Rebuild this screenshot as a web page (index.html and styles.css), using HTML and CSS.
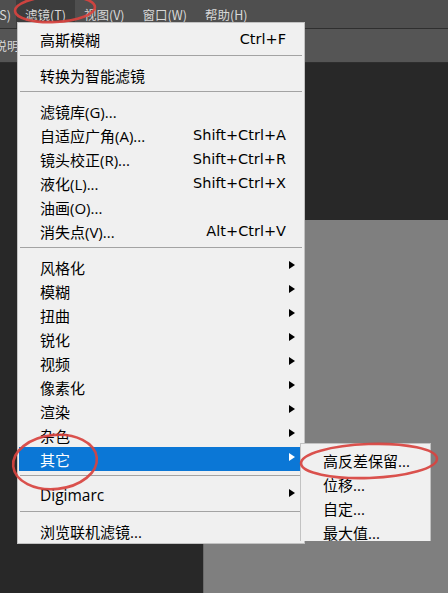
FILE: index.html
```html
<!DOCTYPE html>
<html lang="zh-CN">
<head>
<meta charset="utf-8">
<title>滤镜菜单</title>
<link rel="stylesheet" href="styles.css">
</head>
<body>
<div class="screen">
  <div class="menubar">
    <div class="mb-item mb-first"><span>选择(S)</span></div>
    <div class="mb-item active">滤镜(T)</div>
    <div class="mb-item">视图(V)</div>
    <div class="mb-item">窗口(W)</div>
    <div class="mb-item">帮助(H)</div>
  </div>
  <div class="optbar"><span class="opt-text">说明</span></div>
  <div class="workspace">
    <div class="panel-left"></div>
    <div class="doc">
      <div class="doc-top"></div>
      <div class="canvas"></div>
    </div>
  </div>

  <div class="menu main-menu">
    <div class="item"><span class="label">高斯模糊</span><span class="key">Ctrl+F</span><span class="arrow-col"></span></div>
    <div class="sep"></div>
    <div class="item"><span class="label">转换为智能滤镜</span><span class="arrow-col"></span></div>
    <div class="sep"></div>
    <div class="item"><span class="label">滤镜库(G)...</span><span class="arrow-col"></span></div>
    <div class="item"><span class="label">自适应广角(A)...</span><span class="key">Shift+Ctrl+A</span><span class="arrow-col"></span></div>
    <div class="item"><span class="label">镜头校正(R)...</span><span class="key">Shift+Ctrl+R</span><span class="arrow-col"></span></div>
    <div class="item"><span class="label">液化(L)...</span><span class="key">Shift+Ctrl+X</span><span class="arrow-col"></span></div>
    <div class="item"><span class="label">油画(O)...</span><span class="arrow-col"></span></div>
    <div class="item"><span class="label">消失点(V)...</span><span class="key">Alt+Ctrl+V</span><span class="arrow-col"></span></div>
    <div class="sep"></div>
    <div class="item"><span class="label">风格化</span><span class="arrow-col"><i class="arrow"></i></span></div>
    <div class="item"><span class="label">模糊</span><span class="arrow-col"><i class="arrow"></i></span></div>
    <div class="item"><span class="label">扭曲</span><span class="arrow-col"><i class="arrow"></i></span></div>
    <div class="item"><span class="label">锐化</span><span class="arrow-col"><i class="arrow"></i></span></div>
    <div class="item"><span class="label">视频</span><span class="arrow-col"><i class="arrow"></i></span></div>
    <div class="item"><span class="label">像素化</span><span class="arrow-col"><i class="arrow"></i></span></div>
    <div class="item"><span class="label">渲染</span><span class="arrow-col"><i class="arrow"></i></span></div>
    <div class="item"><span class="label">杂色</span><span class="arrow-col"><i class="arrow"></i></span></div>
    <div class="item hot"><span class="label">其它</span><span class="arrow-col"><i class="arrow"></i></span></div>
    <div class="sep"></div>
    <div class="item"><span class="label latin">Digimarc</span><span class="arrow-col"><i class="arrow"></i></span></div>
    <div class="sep"></div>
    <div class="item"><span class="label">浏览联机滤镜...</span><span class="arrow-col"></span></div>
  </div>

  <div class="menu sub-menu">
    <div class="item"><span class="label">高反差保留...</span></div>
    <div class="item"><span class="label">位移...</span></div>
    <div class="item"><span class="label">自定...</span></div>
    <div class="item"><span class="label">最大值...</span></div>
  </div>

  <svg class="marks" width="448" height="593" viewBox="0 0 448 593">
    <ellipse cx="55" cy="9" rx="40" ry="13" transform="rotate(-3 55 9)"/>
    <ellipse cx="55" cy="462" rx="42" ry="27" transform="rotate(-6 55 462)"/>
    <ellipse cx="369" cy="461" rx="68" ry="17" transform="rotate(-2 369 461)"/>
  </svg>
</div>
</body>
</html>
```

FILE: styles.css
```css
* { box-sizing: border-box; }
html, body { margin: 0; padding: 0; }
body { background: #282828; }

.screen {
  position: relative;
  width: 448px;
  height: 593px;
  overflow: hidden;
  display: flex;
  flex-direction: column;
  font-family: "Noto Sans CJK SC", sans-serif;
}

/* top menu bar */
.menubar {
  flex: none;
  height: 29px;
  display: flex;
  background: #4f4f4f;
  border-bottom: 1px solid #2f2f2f;
  color: #d8d8d8;
  font-size: 12.5px;
}
.mb-item {
  height: 28px;
  display: flex;
  align-items: center;
  padding: 0 9px;
  white-space: nowrap;
}
.mb-first {
  width: 16px;
  padding: 0 5px 0 0;
  justify-content: flex-end;
  overflow: hidden;
}
.mb-item.active { background: #3d3d3d; }

/* options bar */
.optbar {
  flex: none;
  height: 34px;
  display: flex;
  align-items: center;
  background: #555555;
  border-bottom: 1px solid #2e2e2e;
  color: #d8d8d8;
  font-size: 12px;
  overflow: hidden;
}
.opt-text { margin-left: -5px; white-space: nowrap; }

/* workspace */
.workspace { flex: 1; display: flex; }
.panel-left { width: 203px; background: #282828; }
.doc { flex: 1; display: flex; flex-direction: column; }
.doc-top { height: 157px; background: #282828; }
.canvas { flex: 1; background: #7f7f7f; border-left: 1px solid #6a6a6a; }

/* menus */
.menu {
  position: absolute;
  background: #f0f0f0;
  border: 1px solid #c2c2c2;
  font-family: "Open Sans", "Noto Sans CJK SC", sans-serif;
  font-size: 15px;
  color: #000;
}
.main-menu {
  left: 17px;
  top: 22px;
  width: 288px;
  padding-top: 4px;
}
.sub-menu {
  left: 300px;
  top: 443px;
  width: 131px;
  height: 98px;
  padding-top: 4px;
  overflow: hidden;
  border-bottom: none;
}

.item {
  height: 24px;
  display: flex;
  align-items: center;
  margin: 0 1px;
  padding-left: 21px;
}
.label { flex: 1; white-space: nowrap; }
.label.latin { font-size: 15.5px; }
.key {
  font-family: "DejaVu Sans", sans-serif;
  font-size: 14.5px;
  white-space: nowrap;
}
.arrow-col {
  flex: none;
  width: 17px;
  height: 24px;
  display: flex;
  align-items: center;
}
.arrow {
  display: block;
  margin-left: 3px;
  margin-top: -5px;
  width: 0;
  height: 0;
  border-left: 6px solid #000;
  border-top: 4.5px solid transparent;
  border-bottom: 4.5px solid transparent;
}
.item.hot { background: #0b77d6; color: #fff; }
.item.hot .arrow { border-left-color: #fff; }

.sep {
  height: 12px;
  padding-top: 4px;
  margin: 0 2px;
}
.sep::before {
  content: "";
  display: block;
  height: 1px;
  background: #a3a3a3;
}

/* red annotation rings */
.marks {
  position: absolute;
  left: 0;
  top: 0;
  pointer-events: none;
}
.marks ellipse {
  fill: none;
  stroke: #d8433f;
  stroke-width: 2.6;
  opacity: 0.92;
}
```
